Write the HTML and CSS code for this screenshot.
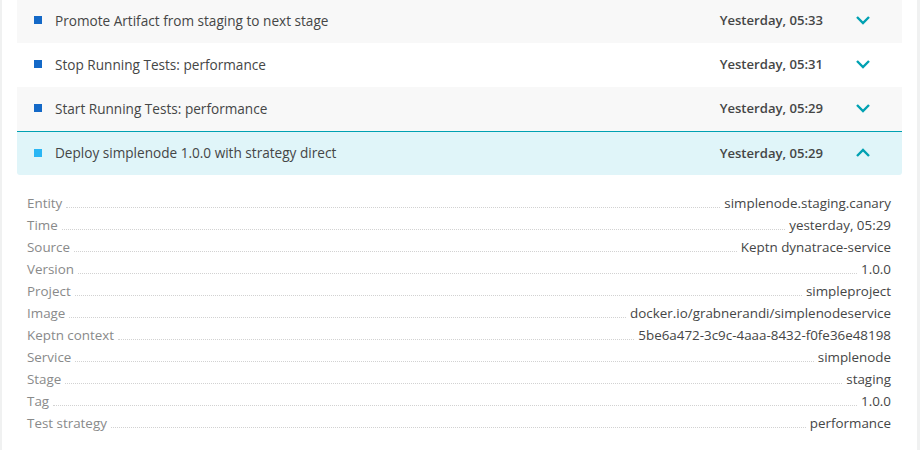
FILE: index.html
```html
<!DOCTYPE html>
<html>
<head>
<meta charset="utf-8">
<link rel="stylesheet" href="styles.css">
</head>
<body>
<div class="page">
  <div class="list">
    <div class="row odd first">
      <span class="bullet"></span>
      <span class="title">Promote Artifact from staging to next stage</span>
      <span class="time">Yesterday, 05:33</span>
      <span class="chev"><svg width="16" height="10" viewBox="0 0 16 10"><path d="M2 2 L8 8 L14 2" fill="none" stroke="#00a1b2" stroke-width="2.4"/></svg></span>
    </div>
    <div class="row">
      <span class="bullet"></span>
      <span class="title">Stop Running Tests: performance</span>
      <span class="time">Yesterday, 05:31</span>
      <span class="chev"><svg width="16" height="10" viewBox="0 0 16 10"><path d="M2 2 L8 8 L14 2" fill="none" stroke="#00a1b2" stroke-width="2.4"/></svg></span>
    </div>
    <div class="row odd">
      <span class="bullet"></span>
      <span class="title">Start Running Tests: performance</span>
      <span class="time">Yesterday, 05:29</span>
      <span class="chev"><svg width="16" height="10" viewBox="0 0 16 10"><path d="M2 2 L8 8 L14 2" fill="none" stroke="#00a1b2" stroke-width="2.4"/></svg></span>
    </div>
    <div class="row open">
      <span class="bullet"></span>
      <span class="title">Deploy simplenode 1.0.0 with strategy direct</span>
      <span class="time">Yesterday, 05:29</span>
      <span class="chev"><svg width="16" height="10" viewBox="0 0 16 10"><path d="M2 8 L8 2 L14 8" fill="none" stroke="#00a1b2" stroke-width="2.4"/></svg></span>
    </div>
    <div class="details">
      <div class="kv"><span class="k">Entity</span><span class="dots"></span><span class="v">simplenode.staging.canary</span></div>
      <div class="kv"><span class="k">Time</span><span class="dots"></span><span class="v">yesterday, 05:29</span></div>
      <div class="kv"><span class="k">Source</span><span class="dots"></span><span class="v">Keptn dynatrace-service</span></div>
      <div class="kv"><span class="k">Version</span><span class="dots"></span><span class="v">1.0.0</span></div>
      <div class="kv"><span class="k">Project</span><span class="dots"></span><span class="v">simpleproject</span></div>
      <div class="kv"><span class="k">Image</span><span class="dots"></span><span class="v">docker.io/grabnerandi/simplenodeservice</span></div>
      <div class="kv"><span class="k">Keptn context</span><span class="dots"></span><span class="v">5be6a472-3c9c-4aaa-8432-f0fe36e48198</span></div>
      <div class="kv"><span class="k">Service</span><span class="dots"></span><span class="v">simplenode</span></div>
      <div class="kv"><span class="k">Stage</span><span class="dots"></span><span class="v">staging</span></div>
      <div class="kv"><span class="k">Tag</span><span class="dots"></span><span class="v">1.0.0</span></div>
      <div class="kv"><span class="k">Test strategy</span><span class="dots"></span><span class="v">performance</span></div>
    </div>
  </div>
</div>
</body>
</html>
```
FILE: styles.css
```css
html, body {
  margin: 0;
  padding: 0;
  background: #fff;
}
body {
  font-family: "Open Sans", sans-serif;
  font-size: 13.4px;
  color: #454646;
  overflow: hidden;
}
.page {
  height: 451px;
  border-left: 2px solid #f0f1f1;
  border-right: 3px solid #f0f1f1;
  padding: 0 15px;
  box-sizing: border-box;
  width: 920px;
}
.list {
  margin-top: -1px;
}
.row {
  display: flex;
  align-items: center;
  height: 44px;
  padding-bottom: 2px;
  box-sizing: border-box;
  background: #fff;
  font-size: 13.6px;
}
.row.odd {
  background: #f8f8f8;
}
.bullet {
  width: 8px;
  height: 8px;
  background: #1469c7;
  margin-left: 17px;
  margin-right: 13px;
  flex: none;
}
.title {
  flex: 1;
}
.time {
  font-weight: 600;
  font-size: 13.1px;
  margin-right: 32px;
}
.chev {
  width: 16px;
  height: 10px;
  display: flex;
  margin-right: 31px;
}
.row.open {
  height: 44px;
  border-top: 1px solid #00a1b2;
  background: #e0f5f9;
  border-radius: 0 0 3px 3px;
}
.row.open .bullet {
  background: #2ab6f4;
}
.row.open .chev {
  margin-top: 1px;
}
.details {
  padding: 17px 11px 0 10px;
}
.kv {
  display: flex;
  align-items: baseline;
  height: 22px;
  line-height: 22px;
}
.k {
  color: #898a8a;
}
.dots {
  flex: 1;
  border-bottom: 1px dotted #d2d2d2;
  margin: 0 4px;
}
.v {
  color: #454646;
}
```
